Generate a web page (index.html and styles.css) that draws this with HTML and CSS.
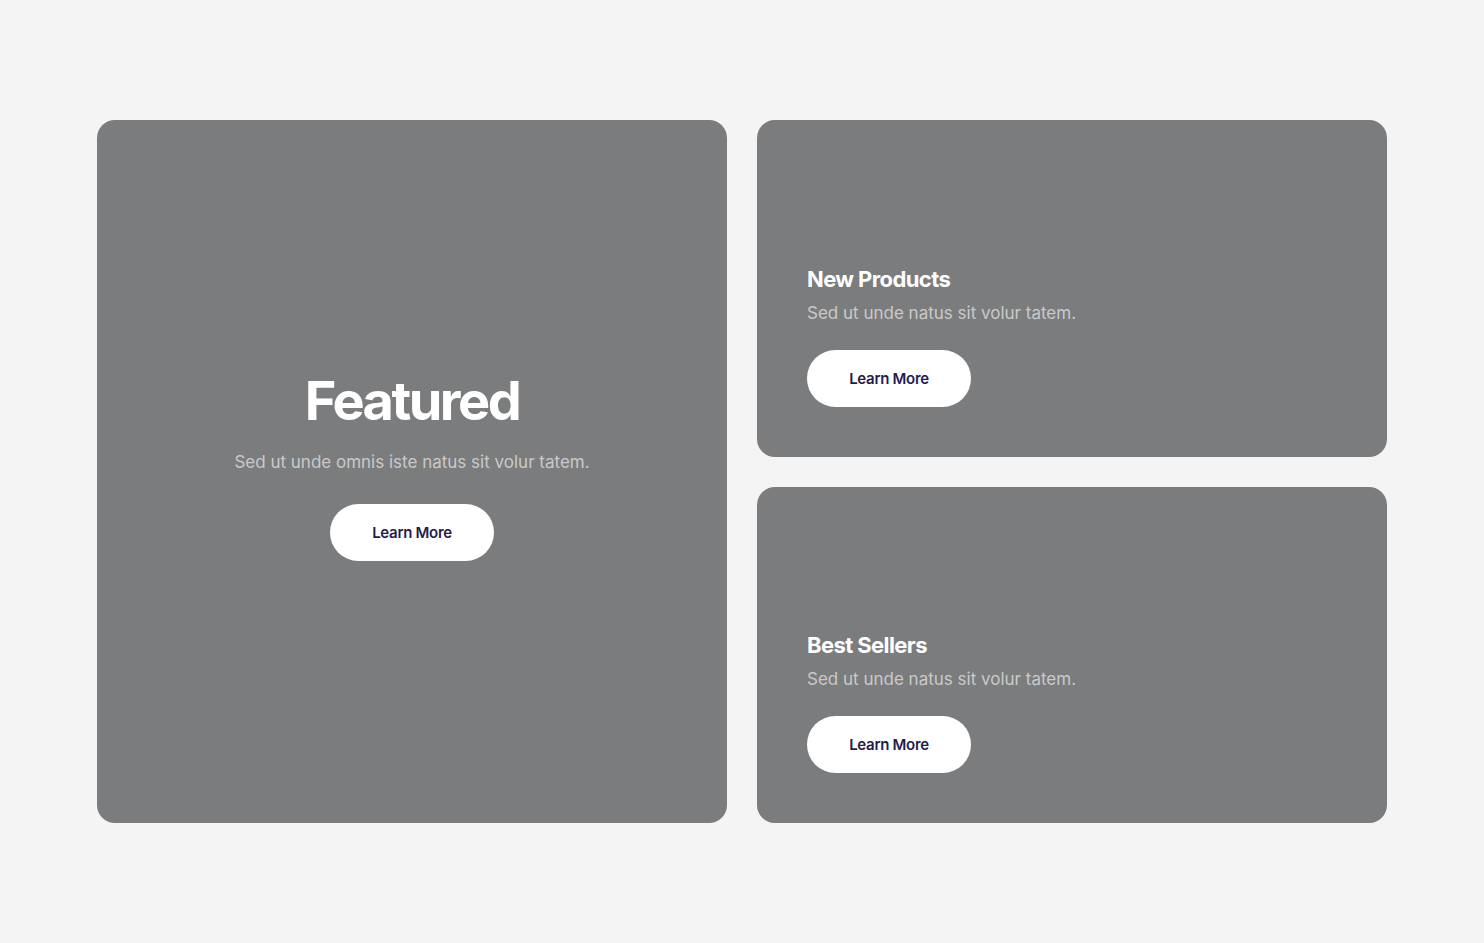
FILE: index.html
```html
<!DOCTYPE html>
<html lang="en">

<head>
    <meta charset="UTF-8">
    <meta name="viewport" content="width=device-width, initial-scale=1.0">
    <title>Collections</title>
    <link rel="stylesheet" href="styles.css">
</head>

<body>
    <div class="contenedor">
        <div class="tarjeta destacada">
            <h1>Featured</h1>
            <p>Sed ut unde omnis iste natus sit volur tatem.</p>
            <a class="boton" href="#">Learn More</a>
        </div>

        <div class="columna">
            <div class="tarjeta">
                <h2>New Products</h2>
                <p>Sed ut unde natus sit volur tatem.</p>
                <a class="boton" href="#">Learn More</a>
            </div>

            <div class="tarjeta">
                <h2>Best Sellers</h2>
                <p>Sed ut unde natus sit volur tatem.</p>
                <a class="boton" href="#">Learn More</a>
            </div>
        </div>
    </div>
</body>

</html>
```

FILE: styles.css
```css
body {
    font-family: Inter, "Noto Sans", sans-serif;
    margin: 0;
    padding: 0;
    background-color: #f4f4f4;
}

.contenedor {
    width: 1290px;
    margin: 120px auto 0;
    display: grid;
    grid-template-columns: 630px 630px;
    gap: 30px;
}

.columna {
    display: grid;
    grid-template-rows: 337px 336px;
    gap: 30px;
}

.tarjeta {
    background-color: #7b7c7e;
    border-radius: 18px;
    padding: 0 50px 50px;
    box-sizing: border-box;
    display: flex;
    flex-direction: column;
    justify-content: flex-end;
    align-items: flex-start;
}

.destacada {
    height: 703px;
    padding: 0 40px 13px;
    justify-content: center;
    align-items: center;
    text-align: center;
}

h1 {
    margin: 0 0 16px;
    font-size: 54px;
    line-height: 64px;
    font-weight: 700;
    letter-spacing: -2.5px;
    color: #ffffff;
}

h2 {
    margin: 0 0 6px;
    font-size: 22px;
    line-height: 30px;
    font-weight: 700;
    letter-spacing: -0.6px;
    color: #ffffff;
}

p {
    margin: 0 0 24px;
    font-size: 17px;
    line-height: 26px;
    letter-spacing: 0;
    color: #c9c9ca;
}

.destacada p {
    margin-bottom: 29px;
}

.boton {
    display: flex;
    align-items: center;
    justify-content: center;
    width: 164px;
    height: 57px;
    border-radius: 30px;
    background-color: #ffffff;
    color: #241c4e;
    font-size: 15px;
    font-weight: 600;
    letter-spacing: -0.3px;
    text-decoration: none;
}
```
